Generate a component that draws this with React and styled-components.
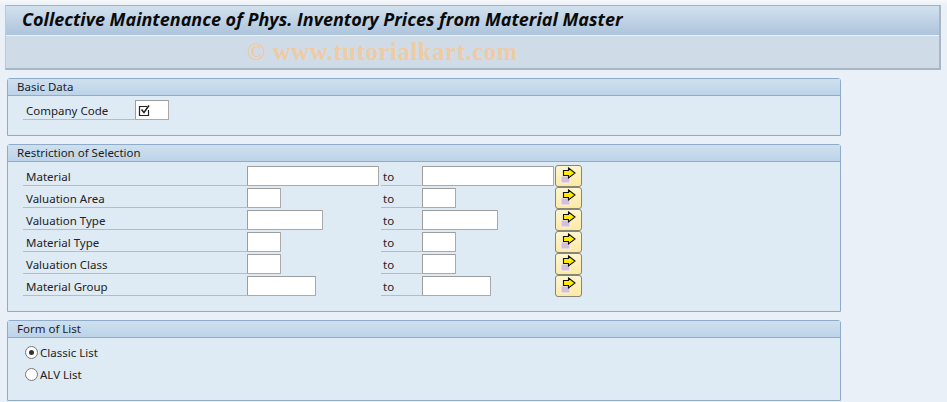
import React from "react";
import styled, { createGlobalStyle } from "styled-components";

const GlobalStyle = createGlobalStyle`
  html, body {
    margin: 0;
    padding: 0;
    background: #e9f0f7;
  }
  body {
    font-family: "Noto Sans", "Open Sans", sans-serif;
    font-size: 11.5px;
    color: #222;
  }
`;

const Screen = styled.div`
  width: 947px;
  height: 402px;
  overflow: hidden;
  box-sizing: border-box;
  padding: 5px 6px 0 5px;
  background: linear-gradient(#f6f8fb 0, #e9f0f7 6px);
`;

const Header = styled.header`
  border: 1px solid #a9b6c6;
  border-top-color: #a5b0c2;
  border-left-color: #bcc8d6;
  border-right-width: 2px;
  border-bottom-width: 2px;
`;

const TitleBar = styled.div`
  height: 30px;
  box-sizing: border-box;
  padding: 0 0 3px 16px;
  display: flex;
  align-items: center;
  background: linear-gradient(#d2e1ee, #adc4db);
  border-bottom: 1px solid #eaf1f7;
`;

const Title = styled.h1`
  margin: 0;
  font-family: "Open Sans", sans-serif;
  font-size: 18px;
  font-weight: 700;
  font-style: italic;
  color: #0a0a0a;
  white-space: nowrap;
`;

const Toolbar = styled.div`
  height: 32px;
  padding-left: 241px;
  display: flex;
  align-items: center;
  background: #cfdce7;
`;

const Watermark = styled.span`
  font-family: "Liberation Serif", serif;
  font-size: 24.7px;
  font-weight: 700;
  letter-spacing: 0.6px;
  color: #efcba4;
  white-space: nowrap;
`;

const Content = styled.main`
  display: flex;
  flex-direction: column;
  gap: 8px;
  width: 834px;
  margin: 8px 0 0 2px;
`;

const Panel = styled.section`
  box-sizing: border-box;
  height: ${(props) => props.$height}px;
  background: #deeaf4;
  border: 1px solid #8eacca;
  border-top-left-radius: 3px;
  border-top-right-radius: 3px;
`;

const PanelHead = styled.div`
  height: 14px;
  padding: 0 0 2px 9px;
  display: flex;
  align-items: center;
  background: linear-gradient(#cfe0ef, #bcd3e8);
  border-bottom: 1px solid #8eacca;
  color: #1c1c1c;
`;

const PanelBody = styled.div`
  padding: ${(props) => props.$top}px 0 0 15px;
  display: flex;
  flex-direction: column;
`;

const CompanyRow = styled.div`
  display: flex;
  height: 20px;
`;

const SelectRow = styled.div`
  display: grid;
  grid-template-columns: 224px 134px 41px 133px 28px;
  height: 22px;
`;

const FieldLabel = styled.label`
  box-sizing: border-box;
  width: ${(props) => props.$width || "auto"};
  height: 20px;
  padding: 1px 0 0 ${(props) => props.$pad ?? 3}px;
  display: flex;
  align-items: center;
  border-bottom: 1px solid #b4bcc4;
  color: #222;
  white-space: nowrap;
`;

const Field = styled.div`
  box-sizing: border-box;
  width: ${(props) => props.$width}px;
  height: 20px;
  padding-left: 2px;
  display: flex;
  align-items: center;
  background: #fff;
  border: 1px solid #a9a9a9;
  border-top-color: #9d9d9d;
  border-left-color: #9d9d9d;
  border-radius: 1px;
`;

const ArrowButton = styled.button`
  box-sizing: border-box;
  width: 27px;
  height: 22px;
  margin-top: -1px;
  padding: 0;
  display: flex;
  align-items: center;
  justify-content: center;
  background: linear-gradient(#fdf6d0, #fde9a2);
  border: 1px solid #85857a;
  border-radius: 3px;
`;

const RadioRow = styled.div`
  height: 22px;
  padding-left: 2px;
  display: flex;
  align-items: center;
  gap: 2px;
  color: #222;
`;

const RadioMark = styled.span`
  box-sizing: border-box;
  width: 13px;
  height: 13px;
  display: flex;
  align-items: center;
  justify-content: center;
  background: #fff;
  border: 1px solid #777;
  border-radius: 50%;
  &::after {
    content: "";
    display: ${(props) => (props.$on ? "block" : "none")};
    width: 5px;
    height: 5px;
    border-radius: 50%;
    background: #333;
  }
`;

const CheckIcon = () => (
  <svg width="13" height="13" viewBox="0 0 13 13" fill="none">
    <path d="M9 2.5H1.5v9h9V6" stroke="#222" strokeWidth="1.2" />
    <path d="M3.5 5.5 6 8.5 11 1.5" stroke="#222" strokeWidth="1.5" />
  </svg>
);

const ArrowIcon = () => (
  <svg width="19" height="18" viewBox="0 0 19 18">
    <rect x="2" y="9" width="9" height="7" fill="#d3bfdc" stroke="#f6f1e4" strokeWidth="1" />
    <path
      d="M9.5 1 16 6 9.5 11V8.5H4.5v-5h5z"
      fill="#ffec00"
      stroke="#111"
      strokeWidth="1.1"
    />
  </svg>
);

const selections = [
  { label: "Material", width: 132 },
  { label: "Valuation Area", width: 34 },
  { label: "Valuation Type", width: 76 },
  { label: "Material Type", width: 34 },
  { label: "Valuation Class", width: 34 },
  { label: "Material Group", width: 69 },
];

export default function App() {
  return (
    <Screen>
      <GlobalStyle />
      <Header>
        <TitleBar>
          <Title>Collective Maintenance of Phys. Inventory Prices from Material Master</Title>
        </TitleBar>
        <Toolbar>
          <Watermark>© www.tutorialkart.com</Watermark>
        </Toolbar>
      </Header>
      <Content>
        <Panel $height={58}>
          <PanelHead>Basic Data</PanelHead>
          <PanelBody $top={4}>
            <CompanyRow>
              <FieldLabel $width="112px">Company Code</FieldLabel>
              <Field $width={34}>
                <CheckIcon />
              </Field>
            </CompanyRow>
          </PanelBody>
        </Panel>
        <Panel $height={168}>
          <PanelHead>Restriction of Selection</PanelHead>
          <PanelBody $top={4}>
            {selections.map((row) => (
              <SelectRow key={row.label}>
                <FieldLabel>{row.label}</FieldLabel>
                <Field $width={row.width} />
                <FieldLabel $pad={2}>to</FieldLabel>
                <Field $width={row.width} />
                <ArrowButton>
                  <ArrowIcon />
                </ArrowButton>
              </SelectRow>
            ))}
          </PanelBody>
        </Panel>
        <Panel $height={81}>
          <PanelHead>Form of List</PanelHead>
          <PanelBody $top={3}>
            <RadioRow>
              <RadioMark $on />
              Classic List
            </RadioRow>
            <RadioRow>
              <RadioMark />
              ALV List
            </RadioRow>
          </PanelBody>
        </Panel>
      </Content>
    </Screen>
  );
}
